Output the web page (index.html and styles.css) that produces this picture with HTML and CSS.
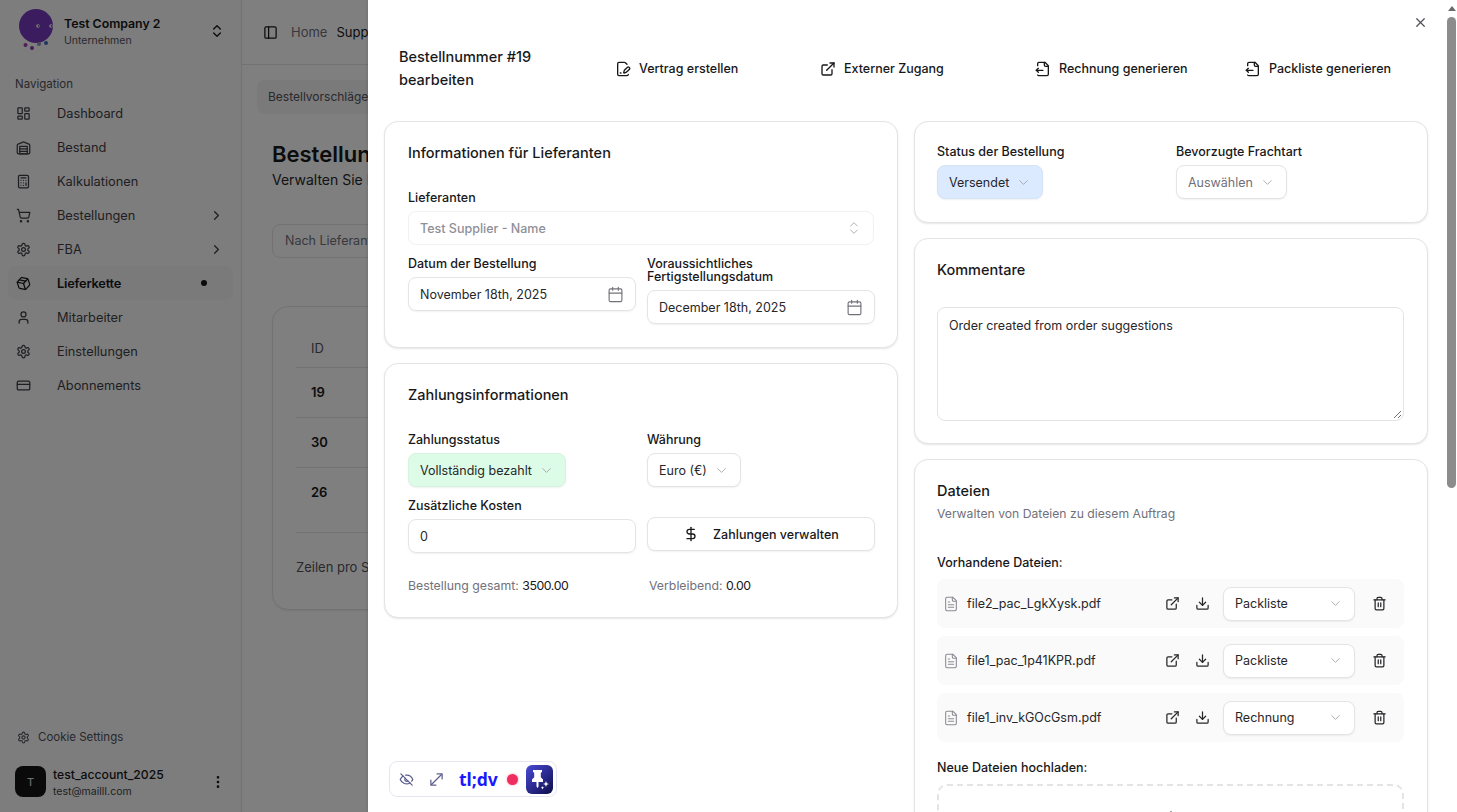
FILE: index.html
```html
<!DOCTYPE html>
<html lang="de">
<head>
  <meta charset="utf-8">
  <title>Bestellnummer #19 bearbeiten</title>
  <link rel="stylesheet" href="styles.css">
</head>
<body>
  <svg class="sprite" xmlns="http://www.w3.org/2000/svg">
    <symbol id="i-dash" viewBox="0 0 24 24"><rect x="3" y="3" width="7" height="9" rx="1"/><rect x="14" y="3" width="7" height="5" rx="1"/><rect x="14" y="12" width="7" height="9" rx="1"/><rect x="3" y="16" width="7" height="5" rx="1"/></symbol>
    <symbol id="i-store" viewBox="0 0 24 24"><path d="M22 8.35V20a2 2 0 0 1-2 2H4a2 2 0 0 1-2-2V8.35A2 2 0 0 1 3.26 6.5l8-3.2a2 2 0 0 1 1.48 0l8 3.2A2 2 0 0 1 22 8.35Z"/><path d="M6 18h12"/><path d="M6 14h12"/><rect x="6" y="10" width="12" height="12"/></symbol>
    <symbol id="i-calc" viewBox="0 0 24 24"><rect x="4" y="2" width="16" height="20" rx="2"/><path d="M8 6h8"/><path d="M16 14v4"/><path d="M16 10h.01"/><path d="M12 10h.01"/><path d="M8 10h.01"/><path d="M12 14h.01"/><path d="M8 14h.01"/><path d="M12 18h.01"/><path d="M8 18h.01"/></symbol>
    <symbol id="i-cart" viewBox="0 0 24 24"><circle cx="8" cy="21" r="1"/><circle cx="19" cy="21" r="1"/><path d="M2.05 2.05h2l2.66 12.42a2 2 0 0 0 2 1.58h9.78a2 2 0 0 0 1.95-1.57l1.65-7.43H5.12"/></symbol>
    <symbol id="i-gear" viewBox="0 0 24 24"><path d="M12.22 2h-.44a2 2 0 0 0-2 2v.18a2 2 0 0 1-1 1.73l-.43.25a2 2 0 0 1-2 0l-.15-.08a2 2 0 0 0-2.73.73l-.22.38a2 2 0 0 0 .73 2.73l.15.1a2 2 0 0 1 1 1.72v.51a2 2 0 0 1-1 1.74l-.15.09a2 2 0 0 0-.73 2.73l.22.38a2 2 0 0 0 2.73.73l.15-.08a2 2 0 0 1 2 0l.43.25a2 2 0 0 1 1 1.73V20a2 2 0 0 0 2 2h.44a2 2 0 0 0 2-2v-.18a2 2 0 0 1 1-1.73l.43-.25a2 2 0 0 1 2 0l.15.08a2 2 0 0 0 2.73-.73l.22-.39a2 2 0 0 0-.73-2.73l-.15-.08a2 2 0 0 1-1-1.74v-.5a2 2 0 0 1 1-1.74l.15-.09a2 2 0 0 0 .73-2.73l-.22-.38a2 2 0 0 0-2.73-.73l-.15.08a2 2 0 0 1-2 0l-.43-.25a2 2 0 0 1-1-1.73V4a2 2 0 0 0-2-2z"/><circle cx="12" cy="12" r="3"/></symbol>
    <symbol id="i-box" viewBox="0 0 24 24"><path d="M11 21.73a2 2 0 0 0 2 0l7-4A2 2 0 0 0 21 16V8a2 2 0 0 0-1-1.73l-7-4a2 2 0 0 0-2 0l-7 4A2 2 0 0 0 3 8v8a2 2 0 0 0 1 1.73z"/><path d="M12 22V12"/><path d="m3.3 7 8.7 5 8.7-5"/><path d="m7.5 4.27 9 5.15"/></symbol>
    <symbol id="i-user" viewBox="0 0 24 24"><path d="M19 21v-2a4 4 0 0 0-4-4H9a4 4 0 0 0-4 4v2"/><circle cx="12" cy="7" r="4"/></symbol>
    <symbol id="i-card" viewBox="0 0 24 24"><rect x="2" y="5" width="20" height="14" rx="2"/><path d="M2 10h20"/></symbol>
    <symbol id="i-right" viewBox="0 0 24 24"><path d="m9 18 6-6-6-6"/></symbol>
    <symbol id="i-down" viewBox="0 0 24 24"><path d="m6 9 6 6 6-6"/></symbol>
    <symbol id="i-updown" viewBox="0 0 24 24"><path d="m7 15 5 5 5-5"/><path d="m7 9 5-5 5 5"/></symbol>
    <symbol id="i-panel" viewBox="0 0 24 24"><rect x="3" y="3" width="18" height="18" rx="2"/><path d="M9 3v18"/></symbol>
    <symbol id="i-more" viewBox="0 0 24 24"><circle cx="12" cy="12" r="1"/><circle cx="12" cy="5" r="1"/><circle cx="12" cy="19" r="1"/></symbol>
    <symbol id="i-x" viewBox="0 0 24 24"><path d="M18 6 6 18"/><path d="m6 6 12 12"/></symbol>
    <symbol id="i-filepen" viewBox="0 0 24 24"><path d="m18 5-2.414-2.414A2 2 0 0 0 14.172 2H6a2 2 0 0 0-2 2v16a2 2 0 0 0 2 2h12a2 2 0 0 0 2-2"/><path d="M21.378 12.626a1 1 0 0 0-3.004-3.004l-4.01 4.012a2 2 0 0 0-.506.854l-.837 2.87a.5.5 0 0 0 .62.62l2.87-.837a2 2 0 0 0 .854-.506z"/><path d="M8 18h1"/></symbol>
    <symbol id="i-ext" viewBox="0 0 24 24"><path d="M15 3h6v6"/><path d="M10 14 21 3"/><path d="M18 13v6a2 2 0 0 1-2 2H5a2 2 0 0 1-2-2V8a2 2 0 0 1 2-2h6"/></symbol>
    <symbol id="i-fileout" viewBox="0 0 24 24"><path d="M14 2v4a2 2 0 0 0 2 2h4"/><path d="M4 7V4a2 2 0 0 1 2-2h9l5 5v13a2 2 0 0 1-2 2H6a2 2 0 0 1-2-1"/><path d="m5 11-3 3"/><path d="m5 17-3-3h10"/></symbol>
    <symbol id="i-cal" viewBox="0 0 24 24"><path d="M8 2v4"/><path d="M16 2v4"/><rect x="3" y="4" width="18" height="18" rx="2"/><path d="M3 10h18"/></symbol>
    <symbol id="i-dollar" viewBox="0 0 24 24"><path d="M12 2v20"/><path d="M17 5H9.5a3.5 3.5 0 0 0 0 7h5a3.5 3.5 0 0 1 0 7H6"/></symbol>
    <symbol id="i-file" viewBox="0 0 24 24"><path d="M15 2H6a2 2 0 0 0-2 2v16a2 2 0 0 0 2 2h12a2 2 0 0 0 2-2V7Z"/><path d="M14 2v4a2 2 0 0 0 2 2h4"/><path d="M10 9H8"/><path d="M16 13H8"/><path d="M16 17H8"/></symbol>
    <symbol id="i-dl" viewBox="0 0 24 24"><path d="M21 15v4a2 2 0 0 1-2 2H5a2 2 0 0 1-2-2v-4"/><path d="m7 10 5 5 5-5"/><path d="M12 15V3"/></symbol>
    <symbol id="i-trash" viewBox="0 0 24 24"><path d="M3 6h18"/><path d="M19 6v14c0 1-1 2-2 2H7c-1 0-2-1-2-2V6"/><path d="M8 6V4c0-1 1-2 2-2h4c1 0 2 1 2 2v2"/><path d="M10 11v6"/><path d="M14 11v6"/></symbol>
    <symbol id="i-up" viewBox="0 0 24 24"><path d="M21 15v4a2 2 0 0 1-2 2H5a2 2 0 0 1-2-2v-4"/><path d="m17 8-5-5-5 5"/><path d="M12 3v12"/></symbol>
    <symbol id="i-eyeoff" viewBox="0 0 24 24"><path d="M10.7 5.100A10.700 10.700 0 0 1 22 12a13 13 0 0 1-1.700 2.700"/><path d="M14.100 14.200a3 3 0 0 1-4.200-4.200"/><path d="M17.500 17.500A10.700 10.700 0 0 1 2 12a13.500 13.500 0 0 1 4.500-5.500"/><path d="m3 3 18 18"/></symbol>
    <symbol id="i-expand" viewBox="0 0 24 24"><path d="M4 20 20 4"/><path d="M13 3h8v8"/><path d="M11 21H3v-8"/></symbol>
  </svg>

  <div class="app">
    <aside class="sidebar">
      <div class="company">
        <svg class="logo" viewBox="0 0 38 44">
          <circle class="logo-ball" cx="20" cy="18" r="17"/>
          <circle class="logo-eye" cx="22" cy="18" r="1.800"/>
          <circle class="logo-eye" cx="35" cy="18" r="1.800"/>
          <circle class="logo-pupil" cx="22.500" cy="18" r=".8"/>
          <circle class="logo-pupil" cx="35.500" cy="18" r=".8"/>
          <circle cx="9.500" cy="37" r="2" fill="#a03cb0"/>
          <circle cx="16" cy="40" r="2" fill="#8a3cb0"/>
          <circle cx="23" cy="36" r="2" fill="#9090b8"/>
          <circle cx="30" cy="35" r="2" fill="#3f6cc0"/>
        </svg>
        <div class="company-text">
          <div class="company-name">Test Company 2</div>
          <div class="company-sub">Unternehmen</div>
        </div>
        <svg class="ic ic-16"><use href="#i-updown"/></svg>
      </div>

      <div class="nav-title">Navigation</div>
      <nav class="nav">
        <a class="nav-item"><svg class="ic"><use href="#i-dash"/></svg><span>Dashboard</span></a>
        <a class="nav-item"><svg class="ic"><use href="#i-store"/></svg><span>Bestand</span></a>
        <a class="nav-item"><svg class="ic"><use href="#i-calc"/></svg><span>Kalkulationen</span></a>
        <a class="nav-item"><svg class="ic"><use href="#i-cart"/></svg><span>Bestellungen</span><svg class="ic nav-end"><use href="#i-right"/></svg></a>
        <a class="nav-item"><svg class="ic"><use href="#i-gear"/></svg><span>FBA</span><svg class="ic nav-end"><use href="#i-right"/></svg></a>
        <a class="nav-item active"><svg class="ic ic-box"><use href="#i-box"/></svg><span>Lieferkette</span><i class="nav-dot"></i></a>
        <a class="nav-item"><svg class="ic"><use href="#i-user"/></svg><span>Mitarbeiter</span></a>
        <a class="nav-item"><svg class="ic"><use href="#i-gear"/></svg><span>Einstellungen</span></a>
        <a class="nav-item"><svg class="ic"><use href="#i-card"/></svg><span>Abonnements</span></a>
      </nav>

      <div class="cookie"><svg class="ic ic-13"><use href="#i-gear"/></svg>Cookie Settings</div>
      <div class="account">
        <div class="avatar">T</div>
        <div class="account-text">
          <div class="account-name">test_account_2025</div>
          <div class="account-mail">test@maillI.com</div>
        </div>
        <svg class="ic ic-16"><use href="#i-more"/></svg>
      </div>
    </aside>

    <main class="main">
      <header class="topbar">
        <svg class="ic ic-15"><use href="#i-panel"/></svg>
        <span class="crumb">Home</span>
        <span class="crumb-now">Supply Chain</span>
      </header>
      <div class="content">
        <div class="tabs"><span class="tab">Bestellvorschläge</span></div>
        <h1 class="page-title">Bestellungen</h1>
        <p class="page-sub">Verwalten Sie Ihre Bestellungen</p>
        <div class="search">Nach Lieferanten suchen</div>
        <div class="table-card">
          <div class="t-row t-head">ID</div>
          <div class="t-row">19</div>
          <div class="t-row">30</div>
          <div class="t-row t-last">26</div>
          <div class="t-foot">Zeilen pro Seite</div>
        </div>
      </div>
    </main>
  </div>

  <div class="overlay"></div>

  <section class="sheet">
    <button class="close"><svg class="ic ic-15"><use href="#i-x"/></svg></button>
    <header class="sheet-head">
      <h2 class="sheet-title">Bestellnummer #19 bearbeiten</h2>
      <a class="action"><svg class="ic ic-16"><use href="#i-filepen"/></svg>Vertrag erstellen</a>
      <a class="action"><svg class="ic ic-16"><use href="#i-ext"/></svg>Externer Zugang</a>
      <a class="action"><svg class="ic ic-16"><use href="#i-fileout"/></svg>Rechnung generieren</a>
      <a class="action"><svg class="ic ic-16"><use href="#i-fileout"/></svg>Packliste generieren</a>
    </header>

    <div class="columns">
      <div class="col">
        <div class="card card-supplier">
          <h3 class="card-title">Informationen für Lieferanten</h3>
          <label class="label label-first">Lieferanten</label>
          <div class="field field-muted field-faint">Test Supplier - Name<svg class="ic ic-16 caret"><use href="#i-updown"/></svg></div>
          <div class="two top-gap">
            <div>
              <label class="label">Datum der Bestellung</label>
              <div class="field">November 18th, 2025<svg class="ic ic-17 caret-cal"><use href="#i-cal"/></svg></div>
            </div>
            <div>
              <label class="label">Voraussichtliches Fertigstellungsdatum</label>
              <div class="field">December 18th, 2025<svg class="ic ic-17 caret-cal"><use href="#i-cal"/></svg></div>
            </div>
          </div>
        </div>

        <div class="card card-pay">
          <h3 class="card-title">Zahlungsinformationen</h3>
          <div class="two pay-gap">
            <div>
              <label class="label">Zahlungsstatus</label>
              <div class="pick pick-green">Vollständig bezahlt<svg class="ic chev"><use href="#i-down"/></svg></div>
            </div>
            <div>
              <label class="label">Währung</label>
              <div class="pick">Euro (€)<svg class="ic chev"><use href="#i-down"/></svg></div>
            </div>
          </div>
          <div class="two cost-gap">
            <div>
              <label class="label">Zusätzliche Kosten</label>
              <div class="field">0</div>
            </div>
            <button class="pay-btn"><svg class="ic ic-16"><use href="#i-dollar"/></svg>Zahlungen verwalten</button>
          </div>
          <div class="two totals">
            <div><span class="muted">Bestellung gesamt:</span> <span class="val">3500.00</span></div>
            <div class="total-right"><span class="muted">Verbleibend:</span> <span class="val">0.00</span></div>
          </div>
        </div>
      </div>

      <div class="col col-right">
        <div class="card card-status">
          <div class="two">
            <div>
              <label class="label">Status der Bestellung</label>
              <div class="pick pick-blue">Versendet<svg class="ic chev"><use href="#i-down"/></svg></div>
            </div>
            <div>
              <label class="label">Bevorzugte Frachtart</label>
              <div class="pick pick-empty">Auswählen<svg class="ic chev"><use href="#i-down"/></svg></div>
            </div>
          </div>
        </div>

        <div class="card card-comment">
          <h3 class="card-title">Kommentare</h3>
          <div class="textarea">Order created from order suggestions
            <svg class="grip" viewBox="0 0 9 9"><path d="M8 1 1 8M8 5 5 8"/></svg>
          </div>
        </div>

        <div class="card card-files">
          <h3 class="card-title">Dateien</h3>
          <p class="card-sub">Verwalten von Dateien zu diesem Auftrag</p>
          <div class="files-title">Vorhandene Dateien:</div>
          <div class="file-row">
            <svg class="ic ic-16 file-ic"><use href="#i-file"/></svg>
            <span class="file-name">file2_pac_LgkXysk.pdf</span>
            <svg class="ic ic-15"><use href="#i-ext"/></svg>
            <svg class="ic ic-15"><use href="#i-dl"/></svg>
            <div class="pick file-pick">Packliste<svg class="ic chev"><use href="#i-down"/></svg></div>
            <svg class="ic ic-15"><use href="#i-trash"/></svg>
          </div>
          <div class="file-row">
            <svg class="ic ic-16 file-ic"><use href="#i-file"/></svg>
            <span class="file-name">file1_pac_1p41KPR.pdf</span>
            <svg class="ic ic-15"><use href="#i-ext"/></svg>
            <svg class="ic ic-15"><use href="#i-dl"/></svg>
            <div class="pick file-pick">Packliste<svg class="ic chev"><use href="#i-down"/></svg></div>
            <svg class="ic ic-15"><use href="#i-trash"/></svg>
          </div>
          <div class="file-row">
            <svg class="ic ic-16 file-ic"><use href="#i-file"/></svg>
            <span class="file-name">file1_inv_kGOcGsm.pdf</span>
            <svg class="ic ic-15"><use href="#i-ext"/></svg>
            <svg class="ic ic-15"><use href="#i-dl"/></svg>
            <div class="pick file-pick">Rechnung<svg class="ic chev"><use href="#i-down"/></svg></div>
            <svg class="ic ic-15"><use href="#i-trash"/></svg>
          </div>
          <div class="files-title upload-title">Neue Dateien hochladen:</div>
          <div class="dropzone"><svg class="ic ic-18"><use href="#i-up"/></svg></div>
        </div>
      </div>
    </div>

    <div class="scrollbar"><i class="scroll-up"></i><i class="scroll-thumb"></i></div>
  </section>

  <div class="tldv">
    <svg class="ic ic-15"><use href="#i-eyeoff"/></svg>
    <svg class="ic ic-15"><use href="#i-expand"/></svg>
    <span class="tldv-name">tl;dv</span>
    <i class="tldv-rec"></i>
    <div class="tldv-pin">
      <svg viewBox="0 0 27 29">
        <path class="pin-w" d="M7 5h9v2l-1.200.8v4.400l2.200 2.300V17h-4.500v4.500l-1 1.500-1-1.500V17H6v-2.500l2.200-2.300V7.800L7 7z"/>
        <path class="pin-w" d="M20 16l.8 2.200 2.200.8-2.200.8-.8 2.200-.8-2.200-2.200-.8 2.200-.8zM16.500 21l.5 1.300 1.300.5-1.300.5-.5 1.300-.5-1.300-1.300-.5 1.300-.5z"/>
      </svg>
    </div>
  </div>
</body>
</html>
```

FILE: styles.css
```css
* {
  box-sizing: border-box;
}

html, body {
  margin: 0;
  height: 100%;
  overflow: hidden;
}

body {
  position: relative;
  font-family: Inter, "Noto Sans", sans-serif;
  font-size: 13px;
  color: #18181b;
  background: #fff;
}

h1, h2, h3, p {
  margin: 0;
}

button {
  font: inherit;
  color: inherit;
}

.sprite {
  display: none;
}

.ic {
  width: 15px;
  height: 15px;
  flex: none;
  fill: none;
  stroke: currentColor;
  stroke-width: 2;
  stroke-linecap: round;
  stroke-linejoin: round;
}

.ic-13 { width: 13px; height: 13px; }
.ic-14 { width: 14px; height: 14px; }
.ic-15 { width: 15px; height: 15px; }
.ic-16 { width: 16px; height: 16px; }
.ic-17 { width: 17px; height: 17px; }
.ic-18 { width: 18px; height: 18px; }

/* app behind the sheet */
.app {
  display: flex;
  height: 812px;
}

.sidebar {
  width: 242px;
  flex: none;
  display: flex;
  flex-direction: column;
  background: #fafafa;
  border-right: 1px solid #e4e4e7;
}

.company {
  display: flex;
  align-items: center;
  height: 60px;
  padding: 2px 16px 0 16px;
}

.logo {
  width: 38px;
  height: 44px;
  margin: -2px 10px 0 0;
  flex: none;
}

.logo-ball { fill: #7638be; }
.logo-eye { fill: #fff; }
.logo-pupil { fill: #222; }

.company-text {
  flex: 1;
  margin-top: 1px;
}

.company-name {
  font-size: 12.300px;
  font-weight: 600;
  line-height: 18px;
}

.company-sub {
  font-size: 10.500px;
  color: #52525b;
  line-height: 15px;
}

.nav-title {
  margin-top: 15px;
  padding-left: 15px;
  font-size: 11.500px;
  line-height: 18px;
  color: #52525b;
}

.nav {
  margin-top: 3px;
  padding: 0 8px;
}

.nav-item {
  display: flex;
  align-items: center;
  height: 34px;
  padding: 0 8px;
  border-radius: 8px;
  color: #3f3f46;
  font-size: 12.800px;
}

.nav-item > span {
  margin-left: 26px;
  flex: 1;
}

.nav-item.active {
  background: #f4f4f5;
  color: #18181b;
  font-weight: 600;
  letter-spacing: -.2px;
}

.nav-end {
  margin-right: 1px;
}

.nav-dot {
  width: 6px;
  height: 6px;
  margin-right: 18px;
  border-radius: 50%;
  background: #18181b;
}

.ic-box {
  transform: rotate(-18deg);
}

.cookie {
  display: flex;
  align-items: center;
  gap: 8px;
  margin-top: auto;
  padding-left: 17px;
  font-size: 11.500px;
  color: #52525b;
}

.account {
  display: flex;
  align-items: center;
  height: 31px;
  margin: 22px 0 15px 15px;
  padding-right: 15px;
}

.avatar {
  width: 31px;
  height: 31px;
  flex: none;
  display: flex;
  align-items: center;
  justify-content: center;
  margin-right: 7px;
  border-radius: 8px;
  background: #141414;
  color: #e4e4e7;
  font-size: 11px;
}

.account-text {
  flex: 1;
  padding-top: 2px;
}

.account-name {
  font-size: 12.200px;
  font-weight: 500;
  line-height: 17px;
}

.account-mail {
  font-size: 10.500px;
  line-height: 17px;
  color: #3f3f46;
}

.main {
  flex: 1;
  overflow: hidden;
}

.topbar {
  display: flex;
  align-items: center;
  height: 65px;
  padding-left: 21px;
  border-bottom: 1px solid #e4e4e7;
}

.crumb {
  margin-left: 13px;
  color: #71717a;
}

.crumb-now {
  margin-left: 9px;
  white-space: nowrap;
}

.content {
  padding: 15px 0 0 30px;
  width: 1000px;
}

.tabs {
  margin-left: -15px;
  width: 300px;
  height: 34px;
  border-radius: 8px;
  background: #f4f4f5;
  padding: 9px 11px;
  font-size: 12px;
  line-height: 16px;
  color: #52525b;
}

.page-title {
  margin-top: 26px;
  font-size: 22px;
  line-height: 28px;
  font-weight: 600;
}

.page-sub {
  margin-top: 1px;
  font-size: 14px;
  line-height: 22px;
  color: #27272a;
}

.search {
  margin-top: 33px;
  width: 400px;
  height: 34px;
  padding: 0 12px;
  border: 1px solid #e4e4e7;
  border-radius: 8px;
  font-size: 12.500px;
  line-height: 32px;
  color: #71717a;
}

.table-card {
  margin-top: 48px;
  height: 304px;
  padding: 0 23px;
  border: 1px solid #e4e4e7;
  border-radius: 16px;
  box-shadow: 0 1px 2px rgba(0,0,0,.08);
}

.t-row {
  height: 50px;
  padding: 0 15px;
  border-bottom: 1px solid #e4e4e7;
  line-height: 49px;
  font-weight: 600;
}

.t-head {
  height: 61px;
  padding-top: 31px;
  line-height: 20px;
  font-weight: 400;
  color: #52525b;
}

.t-last { height: 65px; }

.t-foot {
  margin-top: 26px;
  font-size: 13px;
  color: #52525b;
}

.overlay {
  position: absolute;
  inset: 0;
  background: rgba(0,0,0,.5);
}

/* sheet */
.sheet {
  position: absolute;
  top: 0;
  right: 0;
  bottom: 0;
  width: 1089px;
  background: #fff;
  overflow: hidden;
  box-shadow: -1px 0 3px rgba(0,0,0,.1);
  padding-left: 16px;
}

.close {
  position: absolute;
  top: 15px;
  left: 1045px;
  width: 15px;
  height: 15px;
  padding: 0;
  border: 0;
  background: none;
  display: flex;
  color: #52525b;
}

.sheet-head {
  display: grid;
  grid-template-columns: 216px 205px 215px 210px auto;
  align-items: center;
  height: 121px;
  padding: 16px 0 0 15px;
}

.sheet-title {
  font-size: 14.500px;
  font-weight: 500;
  line-height: 22.500px;
  width: 150px;
}

.action {
  display: flex;
  align-items: center;
  gap: 8px;
  font-size: 12.500px;
  font-weight: 500;
  white-space: nowrap;
}

.columns {
  display: flex;
  gap: 16px;
  width: 1044px;
}

.col {
  width: 514px;
  display: flex;
  flex-direction: column;
  gap: 15px;
}

.card {
  flex: none;
  padding: 21px 23px 0;
  background: #fff;
  border: 1px solid #e4e4e7;
  border-radius: 14px;
  box-shadow: 0 1px 2px rgba(0,0,0,.1);
}

.col-right .card {
  padding-left: 22px;
}

.card-title {
  font-size: 14.500px;
  font-weight: 500;
  line-height: 20px;
}

.card-supplier { height: 227px; }
.card-pay { height: 255px; }
.col-right .card-status { height: 102px; padding-top: 23px; }
.card-comment { height: 206px; }
.card-files { height: 500px; }

.two {
  display: grid;
  grid-template-columns: 228px 228px;
  gap: 11px;
}

.label {
  display: block;
  margin-bottom: 7px;
  font-size: 12.500px;
  font-weight: 500;
  line-height: 13px;
}

.label-first {
  margin-top: 28px;
}

.top-gap {
  margin-top: 12px;
}

.pay-gap {
  margin-top: 28px;
}

.cost-gap {
  margin-top: 12px;
}

.field {
  position: relative;
  display: flex;
  align-items: center;
  justify-content: space-between;
  height: 34px;
  padding: 0 11px;
  border: 1px solid #e4e4e7;
  border-radius: 8px;
  box-shadow: 0 1px 2px rgba(0,0,0,.06);
  font-size: 12.500px;
  color: #27272a;
}

.field-muted {
  color: #8f8f98;
  font-weight: 500;
}

.field-faint {
  border-color: #f1f1f3;
  box-shadow: none;
}

.caret {
  margin-right: 0;
  color: #a1a1aa;
  stroke-width: 1.300;
}

.caret-cal {
  color: #71717a;
  stroke-width: 1.600;
}

.pick {
  display: inline-flex;
  align-items: center;
  gap: 7px;
  height: 34px;
  padding: 0 11px;
  border: 1px solid #e4e4e7;
  border-radius: 8px;
  box-shadow: 0 1px 2px rgba(0,0,0,.06);
  font-size: 12.500px;
  color: #27272a;
  background: #fff;
  white-space: nowrap;
}

.chev {
  color: #a1a1aa;
  stroke-width: 1.400;
}

.pick-green {
  background: #dcfce7;
  border-color: #d5f3df;
}

.pick-blue {
  background: #dbeafe;
  border-color: #d3e3f8;
}

.pick-empty {
  color: #71717a;
}

.pay-btn {
  display: flex;
  align-items: center;
  justify-content: center;
  gap: 14px;
  height: 34px;
  margin-top: 18px;
  padding: 0;
  border: 1px solid #e4e4e7;
  border-radius: 8px;
  background: #fff;
  box-shadow: 0 1px 2px rgba(0,0,0,.06);
  font-size: 12.500px;
  font-weight: 500;
}

.totals {
  margin-top: 25px;
  font-size: 12.300px;
  line-height: 16px;
}

.total-right {
  margin-left: 2px;
}

.muted {
  color: #71717a;
}

.val {
  letter-spacing: -.4px;
}

.textarea {
  position: relative;
  height: 114px;
  margin-top: 27px;
  padding: 10px 11px;
  border: 1px solid #e4e4e7;
  border-radius: 8px;
  font-size: 12.500px;
  line-height: 16px;
  color: #27272a;
}

.grip {
  position: absolute;
  right: 1px;
  bottom: 1px;
  width: 9px;
  height: 9px;
  fill: none;
  stroke: #71717a;
}

.card-sub {
  margin-top: 3px;
  font-size: 12.200px;
  line-height: 20px;
  color: #71717a;
}

.files-title {
  margin-top: 31px;
  margin-bottom: 8px;
  font-size: 12.500px;
  font-weight: 500;
  line-height: 16px;
}

.file-row {
  display: flex;
  align-items: center;
  height: 49px;
  margin-bottom: 8px;
  padding: 0 17px 0 6px;
  border-radius: 8px;
  background: #fafafa;
}

.file-ic {
  margin-right: 8px;
  color: #8a8a93;
  stroke-width: 1.600;
}

.file-name {
  flex: 1;
  font-size: 12.500px;
  color: #27272a;
}

.file-row > .ic-15 {
  color: #27272a;
}

.file-row > .ic-15 + .ic-15 {
  margin-left: 15px;
}

.file-pick {
  width: 132px;
  margin: 0 17px 0 13px;
  justify-content: space-between;
}

.upload-title {
  margin-top: 18px;
  margin-bottom: 8px;
}

.dropzone {
  display: flex;
  justify-content: center;
  height: 120px;
  padding-top: 24px;
  border: 2px dashed #e4e4e7;
  border-radius: 10px;
}

.scrollbar {
  position: absolute;
  top: 0;
  right: 0;
  width: 11px;
  height: 100%;
  display: flex;
  flex-direction: column;
  align-items: center;
}

.scroll-up {
  width: 0;
  height: 0;
  margin-top: 6px;
  border: 4px solid transparent;
  border-top: 0;
  border-bottom: 5px solid #6b6b6b;
}

.scroll-thumb {
  width: 9px;
  height: 471px;
  margin-top: 6px;
  border-radius: 5px;
  background: #8c8c8c;
}

/* recording widget */
.tldv {
  position: absolute;
  left: 389px;
  top: 761px;
  width: 168px;
  height: 36px;
  display: flex;
  align-items: center;
  padding: 0 3px 0 9px;
  background: #fff;
  border: 1px solid #e6e6f2;
  border-radius: 8px;
  color: #5c5f8e;
}

.tldv > .ic-15 + .ic-15 {
  margin-left: 15px;
}

.tldv-name {
  margin-left: 15px;
  font-family: "Noto Sans", sans-serif;
  font-size: 17.500px;
  font-weight: 700;
  color: #1a1aff;
}

.tldv-rec {
  width: 11px;
  height: 11px;
  margin-left: 9px;
  border-radius: 50%;
  background: #ef2d5e;
  box-shadow: 0 0 3px #f7a6bb;
}

.tldv-pin {
  width: 27px;
  height: 29px;
  margin-left: 8px;
  border-radius: 6px;
  background: linear-gradient(135deg, #4a4ad8, #0c0c4a);
}

.tldv-pin svg {
  display: block;
  width: 27px;
  height: 29px;
}

.pin-w {
  fill: #fff;
}
```
